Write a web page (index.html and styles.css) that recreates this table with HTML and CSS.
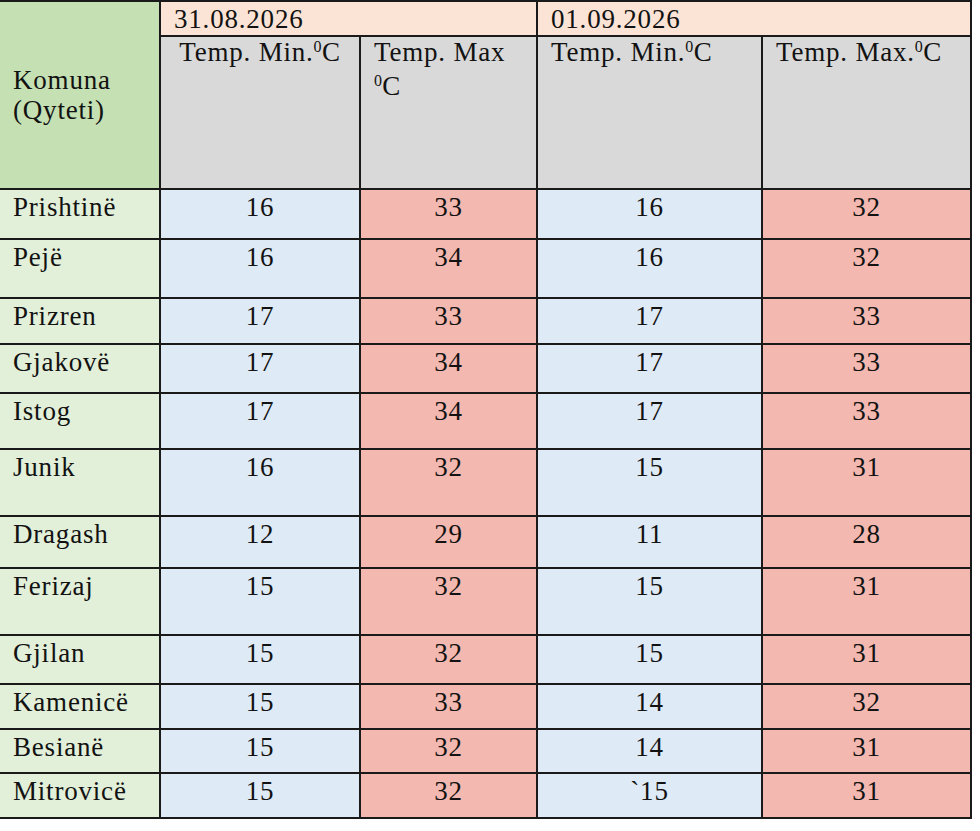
FILE: index.html
```html
<!DOCTYPE html>
<html lang="sq">
<head>
<meta charset="utf-8">
<title>Temperaturat</title>
<link rel="stylesheet" href="styles.css">
</head>
<body>
<table class="temps">
  <colgroup>
    <col class="c-city">
    <col class="c-min1">
    <col class="c-max1">
    <col class="c-min2">
    <col class="c-max2">
  </colgroup>
  <thead>
    <tr class="r-date">
      <th class="city-head" rowspan="2">Komuna<br>(Qyteti)</th>
      <th class="date" colspan="2">31.08.2026</th>
      <th class="date" colspan="2">01.09.2026</th>
    </tr>
    <tr class="r-sub">
      <th class="sub center">Temp. Min.<sup>0</sup>C</th>
      <th class="sub wrap">Temp. Max <sup>0</sup>C</th>
      <th class="sub">Temp. Min.<sup>0</sup>C</th>
      <th class="sub">Temp. Max.<sup>0</sup>C</th>
    </tr>
  </thead>
  <tbody>
    <tr class="h50"><td class="city">Prishtinë</td><td class="min">16</td><td class="max">33</td><td class="min">16</td><td class="max">32</td></tr>
    <tr class="h59"><td class="city">Pejë</td><td class="min">16</td><td class="max">34</td><td class="min">16</td><td class="max">32</td></tr>
    <tr class="h46"><td class="city">Prizren</td><td class="min">17</td><td class="max">33</td><td class="min">17</td><td class="max">33</td></tr>
    <tr class="h49"><td class="city">Gjakovë</td><td class="min">17</td><td class="max">34</td><td class="min">17</td><td class="max">33</td></tr>
    <tr class="h56"><td class="city">Istog</td><td class="min">17</td><td class="max">34</td><td class="min">17</td><td class="max">33</td></tr>
    <tr class="h67"><td class="city">Junik</td><td class="min">16</td><td class="max">32</td><td class="min">15</td><td class="max">31</td></tr>
    <tr class="h52"><td class="city">Dragash</td><td class="min">12</td><td class="max">29</td><td class="min">11</td><td class="max">28</td></tr>
    <tr class="h67"><td class="city">Ferizaj</td><td class="min">15</td><td class="max">32</td><td class="min">15</td><td class="max">31</td></tr>
    <tr class="h49"><td class="city">Gjilan</td><td class="min">15</td><td class="max">32</td><td class="min">15</td><td class="max">31</td></tr>
    <tr class="h45"><td class="city">Kamenicë</td><td class="min">15</td><td class="max">33</td><td class="min">14</td><td class="max">32</td></tr>
    <tr class="h44"><td class="city">Besianë</td><td class="min">15</td><td class="max">32</td><td class="min">14</td><td class="max">31</td></tr>
    <tr class="h45"><td class="city">Mitrovicë</td><td class="min">15</td><td class="max">32</td><td class="min">`15</td><td class="max">31</td></tr>
  </tbody>
</table>
</body>
</html>
```

FILE: styles.css
```css
html, body {
  margin: 0;
  padding: 0;
  background: #ffffff;
}

.temps {
  border-collapse: collapse;
  table-layout: fixed;
  width: 971px;
  font-family: "Times New Roman", "Liberation Serif", "DejaVu Serif", serif;
  font-size: 27px;
  letter-spacing: 0.8px;
  line-height: 30px;
  color: #121212;
}

.c-city { width: 160px; }
.c-min1 { width: 200px; }
.c-max1 { width: 177px; }
.c-min2 { width: 225px; }
.c-max2 { width: 209px; }

.temps th,
.temps td {
  border: 2px solid #1a1a1a;
  padding: 0 13px;
  font-family: inherit;
  font-weight: normal;
  text-align: left;
  vertical-align: top;
  overflow: hidden;
}

.temps tr > :first-child {
  border-left: none;
}

.r-date { height: 35px; }
.r-sub { height: 153px; }

.city-head {
  background: #c5e0b3;
  vertical-align: middle !important;
}

.date {
  background: #fbe4d5;
  padding-top: 2px !important;
}

.sub {
  background: #d9d9d9;
  padding-top: 0 !important;
}

.sub.center { text-align: center !important; }

.sub sup {
  font-size: 16px;
  letter-spacing: 0.3px;
  line-height: 0;
  vertical-align: 9px;
}

.sub.wrap sup {
  line-height: 27px;
}

.city {
  background: #e2efd9;
  padding-top: 2px !important;
}

.min,
.max {
  text-align: center !important;
  padding-top: 2px !important;
}

.min { background: #deeaf6; }
.max { background: #f3b8af; }

.h44 { height: 44px; }
.h45 { height: 45px; }
.h46 { height: 46px; }
.h49 { height: 49px; }
.h50 { height: 50px; }
.h52 { height: 52px; }
.h56 { height: 56px; }
.h59 { height: 59px; }
.h67 { height: 67px; }
```
